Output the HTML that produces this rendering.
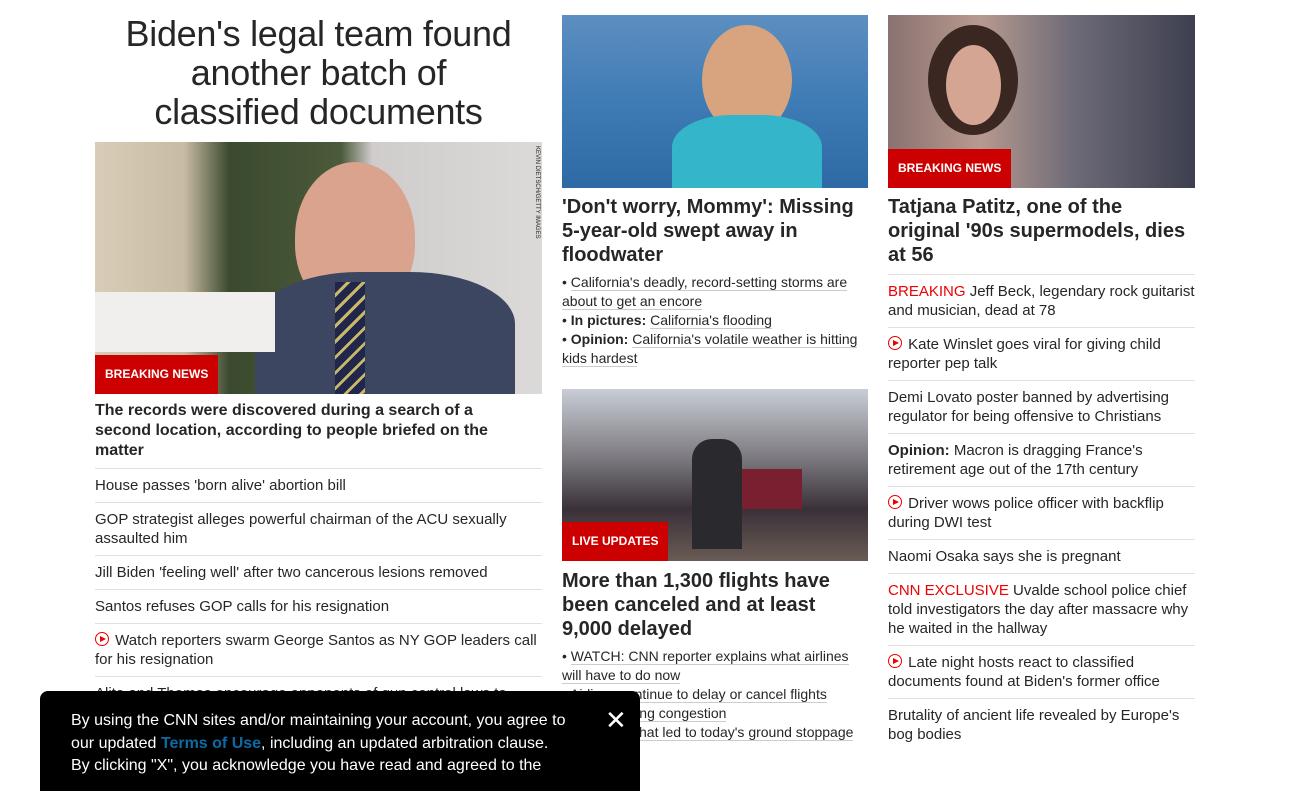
<!DOCTYPE html>
<html><head><meta charset="utf-8"><style>
*{margin:0;padding:0;box-sizing:border-box}
body{width:1290px;height:773px;overflow:hidden;background:#fff;font-family:"Liberation Sans",Arial,sans-serif;color:#0c0c0c;position:relative}
.col{position:absolute;top:0}
.img{position:relative;overflow:hidden}
.badge{position:absolute;left:0;bottom:0;background:#cc0000;color:#fff;font-weight:bold;font-size:12px;height:39px;line-height:39px;padding:0 10px}
.hl{font-weight:bold;font-size:20px;line-height:24px;color:#262626}
.item{border-top:1px solid #e0e0e0;font-size:15px;line-height:19px;color:#262626;padding:7px 0 7px}
.red{color:#e00}
.play{display:inline-block;width:14px;height:14px;border:1.6px solid #e00;border-radius:50%;position:relative;vertical-align:-1px;margin-right:2px}
.play:after{content:"";position:absolute;left:4px;top:2.5px;border-left:6px solid #e00;border-top:3.5px solid transparent;border-bottom:3.5px solid transparent}
.bul{font-size:14px;line-height:19px;color:#262626}
.bul u{text-decoration:none;border-bottom:1px solid #ccc}
</style></head><body>

<div class="col" style="left:95px;width:447px">
 <div style="text-align:center;font-size:36px;line-height:39px;color:#262626;margin-top:14px;letter-spacing:-0.3px">Biden's legal team found<br>another batch of<br>classified documents</div>
 <div class="img" style="margin-top:11px;height:252px;background:linear-gradient(90deg,#d9cdb8 0%,#c8bba3 20%,#3b4a2e 30%,#4b5a3a 55%,#cfcccb 62%,#dcdad9 100%)">
  <div style="position:absolute;left:200px;top:20px;width:120px;height:150px;border-radius:50% 50% 45% 45%;background:#d9a38e"></div>
  <div style="position:absolute;left:160px;top:130px;width:260px;height:130px;border-radius:40% 40% 0 0;background:#3c4660"></div>
  <div style="position:absolute;left:240px;top:140px;width:30px;height:112px;background:repeating-linear-gradient(135deg,#20274a 0 8px,#c9b86a 8px 11px)"></div>
  <div style="position:absolute;left:0;top:150px;width:180px;height:60px;background:#f0efed"></div>
  <div style="position:absolute;right:2px;top:4px;writing-mode:vertical-rl;font-size:6px;color:#222">KEVIN DIETSCH/GETTY IMAGES</div>
  <div class="badge">BREAKING NEWS</div>
 </div>
 <div style="font-weight:bold;font-size:16px;line-height:20px;color:#262626;padding:7px 30px 7px 0">The records were discovered during a search of a second location, according to people briefed on the matter</div>
 <div class="item">House passes 'born alive' abortion bill</div>
 <div class="item">GOP strategist alleges powerful chairman of the ACU sexually assaulted him</div>
 <div class="item">Jill Biden 'feeling well' after two cancerous lesions removed</div>
 <div class="item">Santos refuses GOP calls for his resignation</div>
 <div class="item"><span class="play"></span> Watch reporters swarm George Santos as NY GOP leaders call for his resignation</div>
 <div class="item">Alito and Thomas encourage opponents of gun control laws to</div>
</div>

<div class="col" style="left:562px;width:306px">
 <div class="img" style="margin-top:15px;height:173px;background:linear-gradient(180deg,#5d8fc0 0%,#3f7bb5 50%,#2d6aa5 100%)">
  <div style="position:absolute;left:140px;top:10px;width:90px;height:110px;border-radius:50%;background:#d7a47f"></div>
  <div style="position:absolute;left:110px;top:100px;width:150px;height:80px;border-radius:40% 40% 0 0;background:#35b5c9"></div>
 </div>
 <div class="hl" style="padding-top:7px">'Don't worry, Mommy': Missing 5-year-old swept away in floodwater</div>
 <div class="bul" style="margin-top:6px">• <u>California's deadly, record-setting storms are about to get an encore</u><br>• <b>In pictures:</b> <u>California's flooding</u><br>• <b>Opinion:</b> <u>California's volatile weather is hitting kids hardest</u></div>
 <div class="img" style="margin-top:21px;height:172px;background:linear-gradient(180deg,#c9cdd6 0%,#7c7a80 40%,#3a3038 70%,#6a5c55 100%)">
  <div style="position:absolute;left:130px;top:50px;width:50px;height:110px;background:#2a2a2e;border-radius:20px 20px 0 0"></div>
  <div style="position:absolute;left:180px;top:80px;width:60px;height:40px;background:#7a1f30"></div>
  <div class="badge">LIVE UPDATES</div>
 </div>
 <div class="hl" style="padding-top:8px">More than 1,300 flights have been canceled and at least 9,000 delayed</div>
 <div class="bul" style="margin-top:6px">• <u>WATCH: CNN reporter explains what airlines will have to do now</u><br>• <u>Airlines continue to delay or cancel flights</u><br>• <u>amid ongoing congestion</u><br>• <u>The glitch that led to today's ground stoppage</u></div>
</div>

<div class="col" style="left:888px;width:307px">
 <div class="img" style="margin-top:15px;height:173px;background:linear-gradient(90deg,#8a7270 0%,#b79a8f 30%,#6e6b78 60%,#3d3f4f 100%)">
  <div style="position:absolute;left:40px;top:10px;width:90px;height:110px;border-radius:50%;background:#3a2722"></div>
  <div style="position:absolute;left:58px;top:30px;width:55px;height:80px;border-radius:50%;background:#d5a593"></div>
  <div class="badge">BREAKING NEWS</div>
 </div>
 <div class="hl" style="padding-top:7px;padding-bottom:7px">Tatjana Patitz, one of the original '90s supermodels, dies at 56</div>
 <div class="item"><span class="red">BREAKING</span> Jeff Beck, legendary rock guitarist and musician, dead at 78</div>
 <div class="item"><span class="play"></span> Kate Winslet goes viral for giving child reporter pep talk</div>
 <div class="item">Demi Lovato poster banned by advertising regulator for being offensive to Christians</div>
 <div class="item"><b>Opinion:</b> Macron is dragging France's retirement age out of the 17th century</div>
 <div class="item"><span class="play"></span> Driver wows police officer with backflip during DWI test</div>
 <div class="item">Naomi Osaka says she is pregnant</div>
 <div class="item"><span class="red">CNN EXCLUSIVE</span> Uvalde school police chief told investigators the day after massacre why he waited in the hallway</div>
 <div class="item"><span class="play"></span> Late night hosts react to classified documents found at Biden's former office</div>
 <div class="item">Brutality of ancient life revealed by Europe's bog bodies</div>
</div>

<div style="position:absolute;left:40px;top:691px;width:600px;height:100px;background:#000;border-radius:8px 8px 0 0;color:#fff;font-size:16px;line-height:22.5px;padding:19px 40px 0 31px;white-space:nowrap">By using the CNN sites and/or maintaining your account, you agree to<br>our updated <b style="color:#0c6aa6">Terms of Use</b>, including an updated arbitration clause.<br>By clicking "X", you acknowledge you have read and agreed to the
 <div style="position:absolute;left:565px;top:16px;font-size:26px;line-height:26px">✕</div>
</div>
</body></html>
